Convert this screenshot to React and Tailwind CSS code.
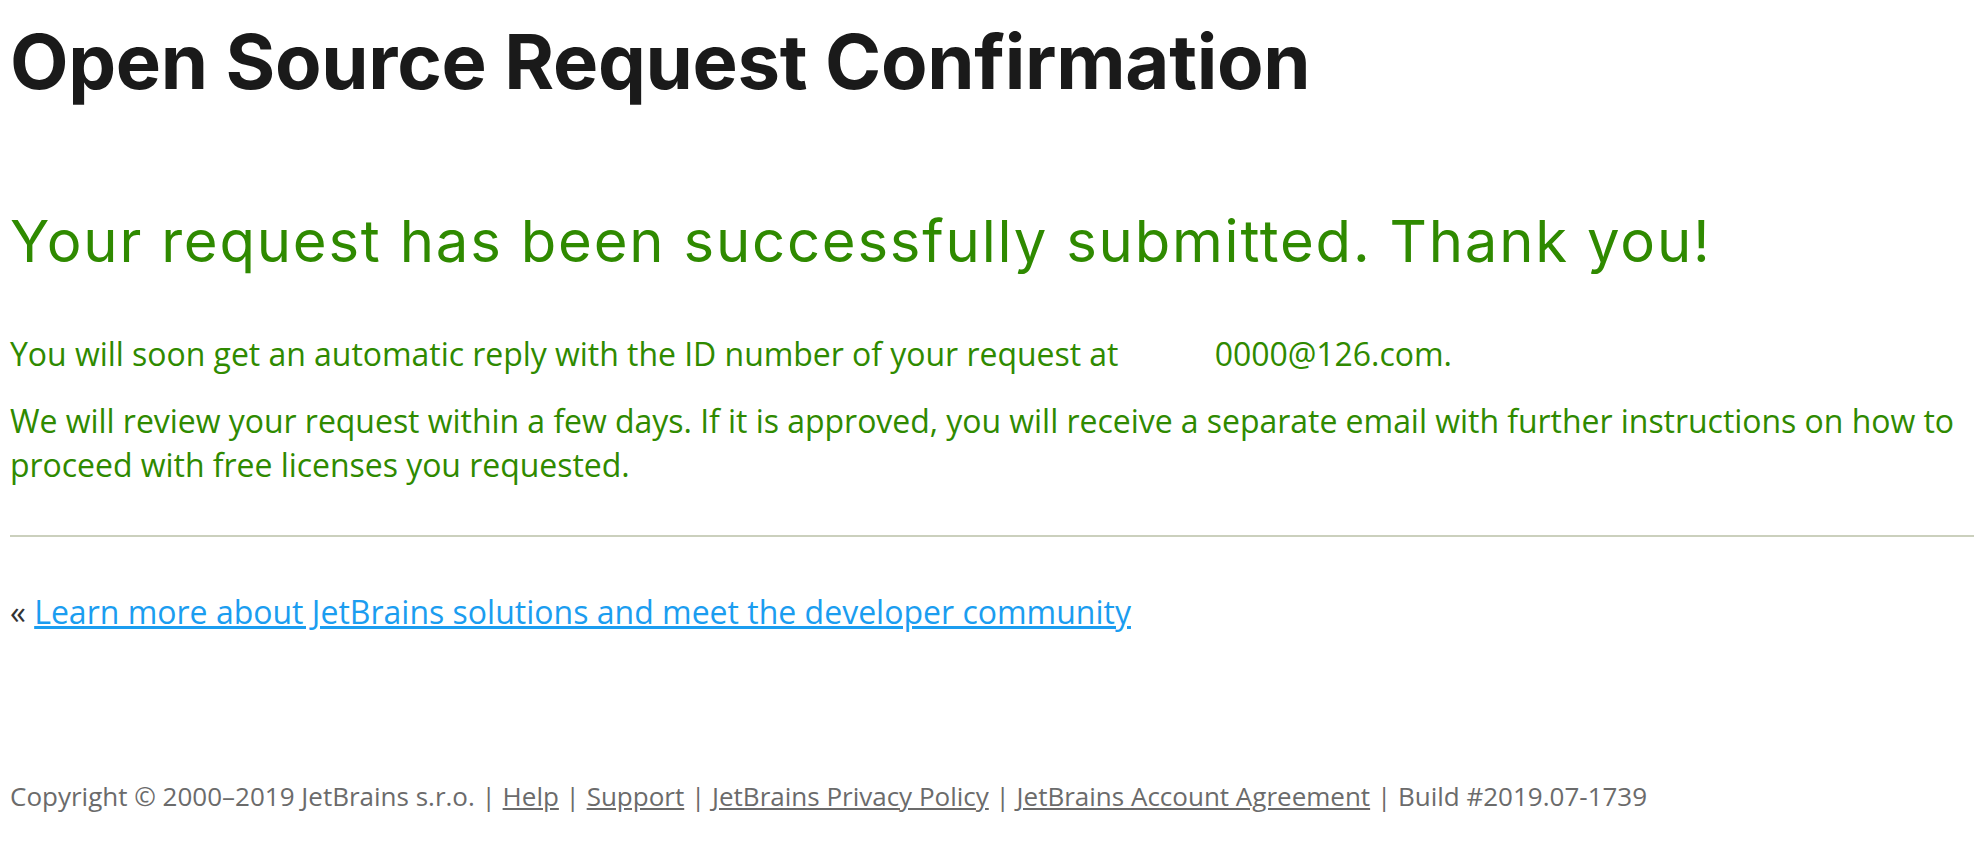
import React from 'react';

const App = () => {
    return (
        <div className="min-h-screen bg-white pl-[10px] pt-[15px] font-['Open_Sans',sans-serif]">
            <h1 className="text-[76px] leading-[92px] font-bold text-[#1a1a1a] font-['Inter',sans-serif] tracking-[-0.3px]">
                Open Source Request Confirmation
            </h1>

            <h2 className="mt-[98px] text-[58px] leading-[72px] text-[#2f8a00] font-['Inter',sans-serif] tracking-[1.8px]">
                Your request has been successfully submitted. Thank you!
            </h2>

            <div className="mt-[55px] text-[32px] leading-[44px] tracking-[-0.04px] text-[#2f8a00]">
                <p>
                    You will soon get an automatic reply with the ID number of your request at{' '}
                    <span className="inline-block w-[88px]"></span>0000@126.com.
                </p>
                <p className="mt-[23px]">
                    We will review your request within a few days. If it is approved, you will receive a separate email with further instructions on how to proceed with free licenses you requested.
                </p>
            </div>

            <hr className="mt-[48px] border-0 h-[2px] bg-[#cbd0bd]" />

            <div className="mt-[53px] text-[32px] leading-[44px]">
                <span className="text-[#333]">«</span>{' '}
                <a href="#" className="text-[#1b9df0] underline">Learn more about JetBrains solutions and meet the developer community</a>
            </div>

            <footer className="mt-[144px] text-[26px] leading-[36px] text-[#6b6b6b]">
                Copyright © 2000–2019 JetBrains s.r.o. | <a href="#" className="underline">Help</a> | <a href="#" className="underline">Support</a> | <a href="#" className="underline">JetBrains Privacy Policy</a> | <a href="#" className="underline">JetBrains Account Agreement</a> | Build #2019.07-1739
            </footer>
        </div>
    );
};

export default App;
